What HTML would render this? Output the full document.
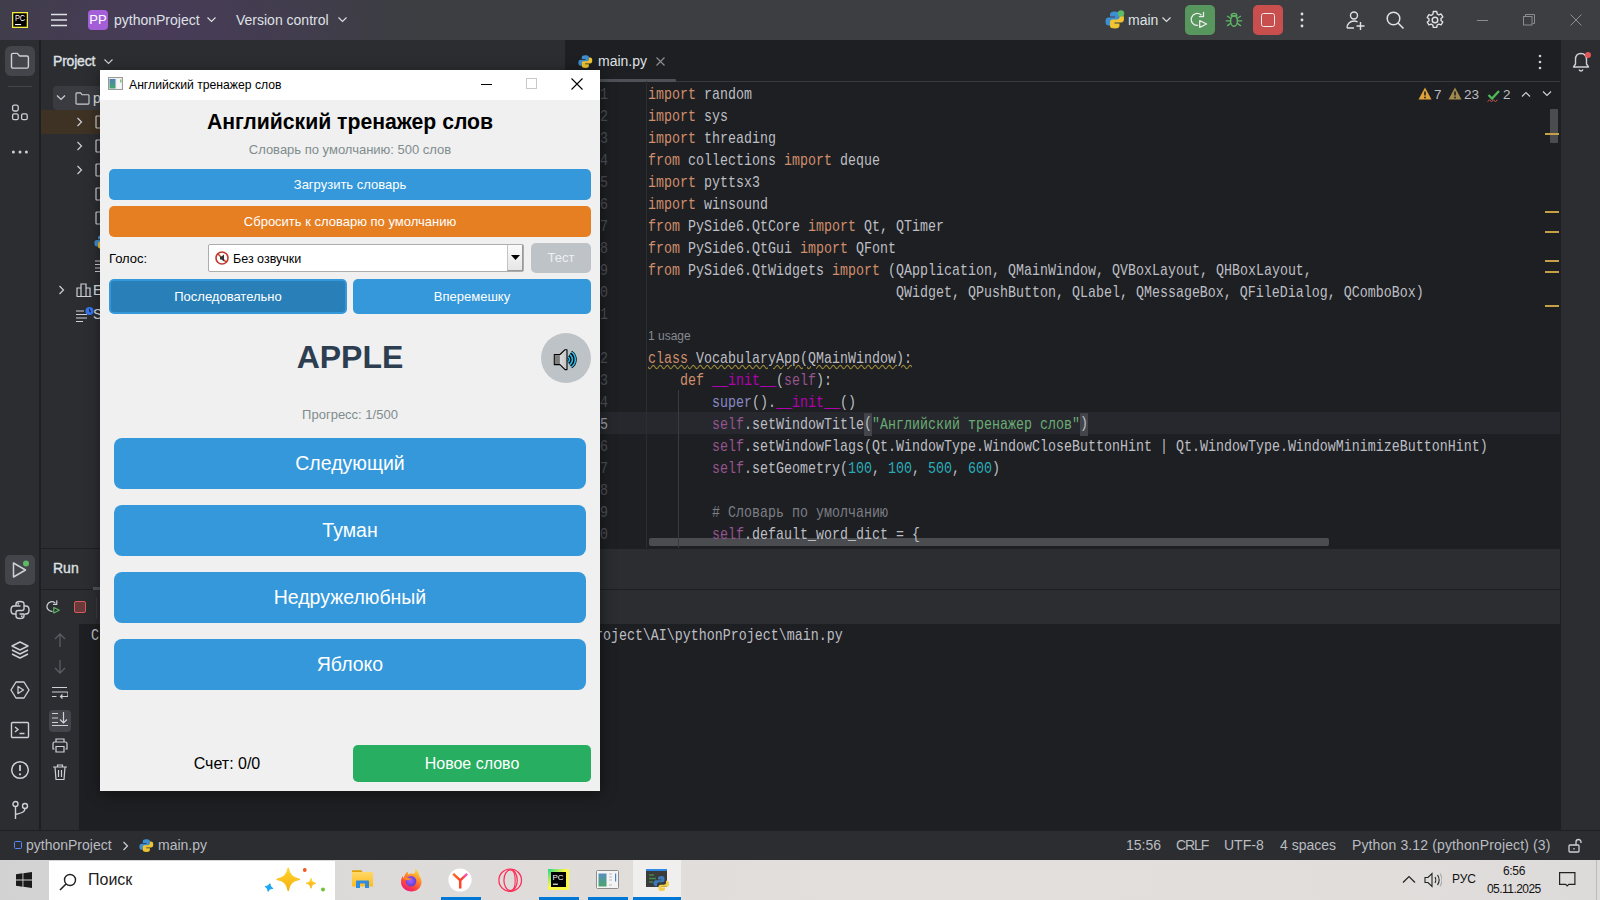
<!DOCTYPE html>
<html><head><meta charset="utf-8">
<style>
*{margin:0;padding:0;box-sizing:border-box}
html,body{width:1600px;height:900px;overflow:hidden;background:#1e1f22;font-family:"Liberation Sans",sans-serif}
.a{position:absolute}
#top{left:0;top:0;width:1600px;height:40px;background:radial-gradient(ellipse 250px 140px at 160px 28px,rgba(80,58,105,.6) 0%,rgba(80,58,105,.35) 45%,rgba(60,63,66,0) 100%),#3c3e42}
#stripeL{left:0;top:40px;width:40px;height:790px;background:#2b2d30;border-right:1px solid #1e1f22}
#proj{left:41px;top:40px;width:524px;height:508px;background:#2b2d30}
#editor{left:565px;top:40px;width:995px;height:508px;background:#1e1f22}
#stripeR{left:1560px;top:40px;width:40px;height:790px;background:#2b2d30;border-left:1px solid #1e1f22}
#run{left:41px;top:548px;width:1519px;height:282px;background:#2b2d30;border-top:1px solid #1e1f22}
#status{left:0;top:830px;width:1600px;height:30px;background:#2b2d30;border-top:1px solid #1e1f22}
#task{left:0;top:860px;width:1600px;height:40px;background:linear-gradient(90deg,#d2d2d2 0%,#dcdad9 20%,#e3dfdc 55%,#e2dedc 80%,#dddbda 100%)}
.code{font-family:"Liberation Mono",monospace;font-size:13.33px;color:#bcbec4;white-space:pre;transform:scaleY(1.2);transform-origin:0 0}
.k{color:#cf8e6d}.s{color:#6aab73}.n{color:#2aacb8}.sf{color:#94558d}.du{color:#b200b2}.cm{color:#7a7e85}
.ln{color:#4b5059;line-height:22px}.sp{color:#8888c6}.br{background:#43454a;padding:1.7px 0}.wv{text-decoration:underline wavy #9c8a3c;text-decoration-thickness:1px;text-underline-offset:1px}
.btn{color:#fff;text-align:center;border-radius:5px}.big{width:472px;height:51px;background:#3498db;border-radius:8px;font-size:19.5px;line-height:51px}
.ui{font-size:13px;color:#dfe1e5}
</style></head><body>
<div id="top" class="a">
 <svg class="a" style="left:12px;top:12px" width="16" height="16" viewBox="0 0 16 16"><rect x=".65" y=".65" width="14.7" height="14.7" fill="#000" stroke="#f4ec3e" stroke-width="1.3"/><text x="2.9" y="9.4" font-family="Liberation Sans" font-size="8.6" fill="#fff" textLength="10.2" lengthAdjust="spacingAndGlyphs">PC</text><rect x="3.1" y="12" width="6" height="1.1" fill="#fff"/></svg>
 <svg class="a" style="left:51px;top:13px" width="16" height="14" viewBox="0 0 16 14"><path d="M0 1.5h16M0 7h16M0 12.5h16" stroke="#dfe1e5" stroke-width="1.4"/></svg>
 <div class="a" style="left:88px;top:10px;width:20px;height:20px;border-radius:4px;background:#a45fd8;color:#fff;font-size:13px;line-height:20px;text-align:center">PP</div>
 <div class="a ui" style="left:114px;top:12px;font-size:14px;color:#dfe1e5">pythonProject</div>
 <svg class="a" style="left:207px;top:17px" width="9" height="6" viewBox="0 0 9 6"><path d="M0.5 0.5l4 4 4-4" fill="none" stroke="#dfe1e5" stroke-width="1.1"/></svg>
 <div class="a ui" style="left:236px;top:12px;font-size:14px;color:#dfe1e5">Version control</div>
 <svg class="a" style="left:338px;top:17px" width="9" height="6" viewBox="0 0 9 6"><path d="M0.5 0.5l4 4 4-4" fill="none" stroke="#dfe1e5" stroke-width="1.1"/></svg>
 <svg class="a" style="left:1105px;top:10px" width="20" height="20" viewBox="0 0 20 20"><path d="M9.5 1.5c-3 0-4.5 1-4.5 3v2h5v1H3.5c-2 0-3 1.5-3 4s1 4 3 4H5v-2.5c0-1.5 1.2-2.5 2.5-2.5h4.5c1.5 0 2.5-1 2.5-2.5v-4c0-1.8-2-2.5-5-2.5z" fill="#3d8fd1"/><path d="M10 18.5c3 0 4.5-1 4.5-3v-2h-5v-1H16c2 0 3-1.5 3-4s-1-4-3-4h-1.5V7c0 1.5-1.2 2.5-2.5 2.5H7.5C6 9.5 5 10.5 5 12v4c0 1.8 2 2.5 5 2.5z" fill="#f0c531"/><circle cx="16" cy="3.5" r="3.2" fill="#5fb865"/></svg>
 <div class="a ui" style="left:1128px;top:12px;font-size:14px;color:#dfe1e5">main</div>
 <svg class="a" style="left:1162px;top:17px" width="9" height="6" viewBox="0 0 9 6"><path d="M0.5 0.5l4 4 4-4" fill="none" stroke="#dfe1e5" stroke-width="1.1"/></svg>
 <div class="a" style="left:1185px;top:5px;width:30px;height:30px;border-radius:5px;background:#57965c"></div>
 <svg class="a" style="left:1190px;top:10px" width="20" height="20" viewBox="0 0 20 20"><path d="M11.2 4.9A6 6 0 1 0 7.6 15.4" fill="none" stroke="#eaeaea" stroke-width="1.3" stroke-linecap="round"/><path d="M13.5 2.3V6.6H9.4" fill="none" stroke="#eaeaea" stroke-width="1.3" stroke-linecap="round" stroke-linejoin="round"/><path d="M9.7 10.6L16.6 14 9.7 17.4z" fill="none" stroke="#eaeaea" stroke-width="1.3" stroke-linejoin="round"/></svg>
 <svg class="a" style="left:1225px;top:10px" width="18" height="20" viewBox="0 0 18 20"><path d="M6.2 6a2.8 2.6 0 0 1 5.6 0z" fill="none" stroke="#5fb865" stroke-width="1.3" stroke-linejoin="round"/><ellipse cx="9" cy="11" rx="3.4" ry="5.2" fill="none" stroke="#5fb865" stroke-width="1.4"/><path d="M2.5 6.3L5.6 8.2M1.2 10.8H5.4M2.5 15.6L5.6 13.4M15.5 6.3L12.4 8.2M16.8 10.8H12.6M15.5 15.6L12.4 13.4" stroke="#5fb865" stroke-width="1.3" stroke-linecap="round"/></svg>
 <div class="a" style="left:1253px;top:5px;width:30px;height:30px;border-radius:5px;background:#c94f4f"></div>
 <div class="a" style="left:1261px;top:13px;width:14px;height:14px;border-radius:2.5px;border:1.4px solid #eaeaea"></div>
 <svg class="a" style="left:1299px;top:11px" width="6" height="18" viewBox="0 0 6 18"><circle cx="3" cy="3" r="1.4" fill="#dfe1e5"/><circle cx="3" cy="9" r="1.4" fill="#dfe1e5"/><circle cx="3" cy="15" r="1.4" fill="#dfe1e5"/></svg>
 <svg class="a" style="left:1345px;top:10px" width="22" height="22" viewBox="0 0 22 22"><circle cx="9" cy="5.5" r="3.5" fill="none" stroke="#dfe1e5" stroke-width="1.4"/><path d="M2 18c0-4 3-7 7-7 1.5 0 2.7.4 3.5 1" fill="none" stroke="#dfe1e5" stroke-width="1.4"/><path d="M2 18h7M15.5 12v8M11.5 16h8" stroke="#dfe1e5" stroke-width="1.4"/></svg>
 <svg class="a" style="left:1385px;top:10px" width="20" height="20" viewBox="0 0 20 20"><circle cx="8.5" cy="8.5" r="6.3" fill="none" stroke="#dfe1e5" stroke-width="1.5"/><path d="M13 13l5.5 5.5" stroke="#dfe1e5" stroke-width="1.6"/></svg>
 <svg class="a" style="left:1425px;top:10px" width="20" height="20" viewBox="0 0 20 20"><path d="M8.3 1.5h3.4l.5 2.4 1.6.9 2.3-.8 1.7 2.9-1.8 1.6v1.9l1.8 1.6-1.7 2.9-2.3-.8-1.6.9-.5 2.4H8.3l-.5-2.4-1.6-.9-2.3.8-1.7-2.9L4 11V9.1L2.2 7.5l1.7-2.9 2.3.8 1.6-.9z" fill="none" stroke="#dfe1e5" stroke-width="1.4" stroke-linejoin="round"/><circle cx="10" cy="10" r="2.8" fill="none" stroke="#dfe1e5" stroke-width="1.4"/></svg>
 <div class="a" style="left:1477px;top:20px;width:11px;height:1px;background:#8a8c90"></div>
 <svg class="a" style="left:1523px;top:14px" width="12" height="12" viewBox="0 0 12 12"><rect x="0.5" y="2.5" width="8.5" height="8.5" fill="none" stroke="#8a8c90"/><path d="M2.5 2.5V.5h9v9h-2" fill="none" stroke="#8a8c90"/></svg>
 <svg class="a" style="left:1570px;top:14px" width="12" height="12" viewBox="0 0 12 12"><path d="M.5.5l11 11M11.5.5l-11 11" stroke="#8a8c90" stroke-width="1"/></svg>
</div>
<div id="stripeL" class="a">
 <div class="a" style="left:5px;top:6px;width:30px;height:30px;border-radius:6px;background:#43454a"></div>
 <svg class="a" style="left:10px;top:12px" width="20" height="18" viewBox="0 0 20 18"><path d="M1.5 3c0-1 .6-1.6 1.6-1.6h4.2l2.4 2.6h7.1c1 0 1.6.6 1.6 1.6v8.9c0 1-.6 1.6-1.6 1.6H3.1c-1 0-1.6-.6-1.6-1.6z" fill="none" stroke="#cdd0d6" stroke-width="1.4" stroke-linejoin="round"/></svg>
 <div class="a" style="left:8px;top:46px;width:24px;height:1px;background:#43454a"></div>
 <svg class="a" style="left:11px;top:63px" width="18" height="18" viewBox="0 0 18 18"><rect x="1.6" y="2.2" width="5.6" height="5.8" rx="1.5" fill="none" stroke="#cdd0d6" stroke-width="1.3"/><rect x="1.6" y="10.9" width="5.6" height="5.8" rx="1.5" fill="none" stroke="#cdd0d6" stroke-width="1.3"/><rect x="10.6" y="10.9" width="5.6" height="5.8" rx="1.5" fill="none" stroke="#cdd0d6" stroke-width="1.3"/></svg>
 <svg class="a" style="left:10px;top:109px" width="20" height="6" viewBox="0 0 20 6"><circle cx="3.4" cy="3" r="1.5" fill="#cdd0d6"/><circle cx="10" cy="3" r="1.5" fill="#cdd0d6"/><circle cx="16.4" cy="3" r="1.5" fill="#cdd0d6"/></svg>
 <div class="a" style="left:5px;top:515px;width:30px;height:30px;border-radius:5px;background:#43454a"></div>
 <svg class="a" style="left:10px;top:520px" width="20" height="20" viewBox="0 0 20 20"><path d="M3.5 3v14l12-7z" fill="none" stroke="#cdd0d6" stroke-width="1.5" stroke-linejoin="round"/><circle cx="16" cy="3.5" r="3" fill="#5fb865"/></svg>
 <svg class="a" style="left:10px;top:560px" width="20" height="20" viewBox="0 0 20 20"><path d="M10 1.5c-3 0-4 1-4 2.5V6h4.5M6 6H4c-2 0-3 1.5-3 4s1 4 3 4h1.5M14 14v2c0 1.5-1 2.5-4 2.5s-4-1-4-2.5v-3.5c0-1.2 1-2 2-2h4c1.2 0 2-.8 2-2V4c0-1.5-1-2.5-4-2.5M14 6h2c2 0 3 1.5 3 4s-1 4-3 4h-1.5M9.5 14H14" fill="none" stroke="#cdd0d6" stroke-width="1.4"/><circle cx="8.2" cy="3.8" r=".9" fill="#cdd0d6"/><circle cx="11.8" cy="16.2" r=".9" fill="#cdd0d6"/></svg>
 <svg class="a" style="left:10px;top:600px" width="20" height="20" viewBox="0 0 20 20"><path d="M10 2l8 4-8 4-8-4z" fill="none" stroke="#cdd0d6" stroke-width="1.4" stroke-linejoin="round"/><path d="M2 10l8 4 8-4M2 14l8 4 8-4" fill="none" stroke="#cdd0d6" stroke-width="1.4" stroke-linejoin="round"/></svg>
 <svg class="a" style="left:10px;top:640px" width="20" height="20" viewBox="0 0 20 20"><path d="M6 2h8l5 8-5 8H6l-5-8z" fill="none" stroke="#cdd0d6" stroke-width="1.4" stroke-linejoin="round"/><path d="M8 6.5v7l5.5-3.5z" fill="none" stroke="#cdd0d6" stroke-width="1.3" stroke-linejoin="round"/></svg>
 <svg class="a" style="left:10px;top:680px" width="20" height="20" viewBox="0 0 20 20"><rect x="1.5" y="2.5" width="17" height="15" rx="1" fill="none" stroke="#cdd0d6" stroke-width="1.4"/><path d="M5 7l3 2.5L5 12M9.5 13.5h5" fill="none" stroke="#cdd0d6" stroke-width="1.4"/></svg>
 <svg class="a" style="left:10px;top:720px" width="20" height="20" viewBox="0 0 20 20"><circle cx="10" cy="10" r="8.3" fill="none" stroke="#cdd0d6" stroke-width="1.5"/><path d="M10 5v6" stroke="#cdd0d6" stroke-width="1.8"/><circle cx="10" cy="14.3" r="1.1" fill="#cdd0d6"/></svg>
 <svg class="a" style="left:10px;top:760px" width="20" height="20" viewBox="0 0 20 20"><circle cx="5.5" cy="4" r="2.5" fill="none" stroke="#cdd0d6" stroke-width="1.4"/><circle cx="15" cy="6" r="2.5" fill="none" stroke="#cdd0d6" stroke-width="1.4"/><path d="M5.5 6.5V19M15 8.5c0 3.5-3 4.5-9.5 6" fill="none" stroke="#cdd0d6" stroke-width="1.4"/></svg>
</div>
<div id="proj" class="a">
 <div class="a ui" style="left:12px;top:13px;font-size:14px;color:#dfe1e5;-webkit-text-stroke:.35px #dfe1e5;letter-spacing:-.2px">Project</div>
 <svg class="a" style="left:63px;top:19px" width="9" height="6" viewBox="0 0 9 6"><path d="M0.5 0.5l4 4 4-4" fill="none" stroke="#cdd0d6" stroke-width="1.1"/></svg>
 <div class="a" style="left:12px;top:46px;width:520px;height:24px;border-radius:4px;background:#393b40"></div>
 <div class="a" style="left:0;top:70px;width:524px;height:24px;background:#3d3223"></div>
 <svg class="a" style="left:15px;top:55px" width="10" height="6" viewBox="0 0 10 6"><path d="M1 .5l4 4 4-4" fill="none" stroke="#cdd0d6" stroke-width="1.2"/></svg>
 <svg class="a" style="left:34px;top:52px" width="15" height="13" viewBox="0 0 16 14"><path d="M1 2c0-.7.3-1 1-1h4l1.5 2H14c.7 0 1 .3 1 1v8c0 .7-.3 1-1 1H2c-.7 0-1-.3-1-1z" fill="none" stroke="#cdd0d6" stroke-width="1.2"/></svg>
 <div class="a ui" style="left:52px;top:50px;font-size:14px;color:#dfe1e5">pythonProject</div>
 <svg class="a" style="left:36px;top:77px" width="6" height="10" viewBox="0 0 6 10"><path d="M.5 1l4 4-4 4" fill="none" stroke="#cdd0d6" stroke-width="1.2"/></svg>
 <svg class="a" style="left:54px;top:75px" width="16" height="14" viewBox="0 0 16 14"><path d="M1 2c0-.7.3-1 1-1h4l1.5 2H14c.7 0 1 .3 1 1v8c0 .7-.3 1-1 1H2c-.7 0-1-.3-1-1z" fill="none" stroke="#cdd0d6" stroke-width="1.2"/></svg>
 <svg class="a" style="left:36px;top:101px" width="6" height="10" viewBox="0 0 6 10"><path d="M.5 1l4 4-4 4" fill="none" stroke="#cdd0d6" stroke-width="1.2"/></svg>
 <svg class="a" style="left:54px;top:99px" width="16" height="14" viewBox="0 0 16 14"><path d="M1 2c0-.7.3-1 1-1h4l1.5 2H14c.7 0 1 .3 1 1v8c0 .7-.3 1-1 1H2c-.7 0-1-.3-1-1z" fill="none" stroke="#cdd0d6" stroke-width="1.2"/></svg>
 <svg class="a" style="left:36px;top:125px" width="6" height="10" viewBox="0 0 6 10"><path d="M.5 1l4 4-4 4" fill="none" stroke="#cdd0d6" stroke-width="1.2"/></svg>
 <svg class="a" style="left:54px;top:123px" width="16" height="14" viewBox="0 0 16 14"><path d="M1 2c0-.7.3-1 1-1h4l1.5 2H14c.7 0 1 .3 1 1v8c0 .7-.3 1-1 1H2c-.7 0-1-.3-1-1z" fill="none" stroke="#cdd0d6" stroke-width="1.2"/></svg>
 <svg class="a" style="left:54px;top:147px" width="16" height="14" viewBox="0 0 16 14"><path d="M1 2c0-.7.3-1 1-1h4l1.5 2H14c.7 0 1 .3 1 1v8c0 .7-.3 1-1 1H2c-.7 0-1-.3-1-1z" fill="none" stroke="#cdd0d6" stroke-width="1.2"/></svg>
 <svg class="a" style="left:54px;top:171px" width="16" height="14" viewBox="0 0 16 14"><path d="M1 2c0-.7.3-1 1-1h4l1.5 2H14c.7 0 1 .3 1 1v8c0 .7-.3 1-1 1H2c-.7 0-1-.3-1-1z" fill="none" stroke="#cdd0d6" stroke-width="1.2"/></svg>
 <svg class="a" style="left:53px;top:194px" width="16" height="16" viewBox="0 0 20 20"><path d="M9.5 1.5c-3 0-4.5 1-4.5 3v2h5v1H3.5c-2 0-3 1.5-3 4s1 4 3 4H5v-2.5c0-1.5 1.2-2.5 2.5-2.5h4.5c1.5 0 2.5-1 2.5-2.5v-4c0-1.8-2-2.5-5-2.5z" fill="#3d8fd1"/><path d="M10 18.5c3 0 4.5-1 4.5-3v-2h-5v-1H16c2 0 3-1.5 3-4s-1-4-3-4h-1.5V7c0 1.5-1.2 2.5-2.5 2.5H7.5C6 9.5 5 10.5 5 12v4c0 1.8 2 2.5 5 2.5z" fill="#f0c531"/></svg>
 <svg class="a" style="left:54px;top:220px" width="14" height="12" viewBox="0 0 14 12"><path d="M0 1h14M0 4.5h14M0 8h14M0 11.5h9" stroke="#cdd0d6" stroke-width="1.2"/></svg>
 <svg class="a" style="left:18px;top:245px" width="6" height="10" viewBox="0 0 6 10"><path d="M.5 1l4 4-4 4" fill="none" stroke="#cdd0d6" stroke-width="1.2"/></svg>
 <svg class="a" style="left:35px;top:242px" width="16" height="15" viewBox="0 0 16 15"><path d="M1 14V6h4v8M5 14V2h5v12M10 14V6h4v8M.5 14.5h15" fill="none" stroke="#cdd0d6" stroke-width="1.2"/></svg>
 <div class="a ui" style="left:52px;top:242px;font-size:14px;color:#dfe1e5">External Libraries</div>
 <svg class="a" style="left:35px;top:267px" width="18" height="15" viewBox="0 0 18 15"><path d="M0 4h8M0 7.5h11M0 11h11M0 14.5h7" stroke="#cdd0d6" stroke-width="1.2"/><circle cx="13.5" cy="4" r="4" fill="#3574f0"/><path d="M13.5 1.8v2.4l1.5 1" stroke="#2b2d30" stroke-width="1"/></svg>
 <div class="a ui" style="left:52px;top:266px;font-size:14px;color:#dfe1e5">Scratches and Consoles</div>
</div>
<div id="editor" class="a">
 <svg class="a" style="left:13px;top:14px" width="15" height="15" viewBox="0 0 20 20"><path d="M9.5 1.5c-3 0-4.5 1-4.5 3v2h5v1H3.5c-2 0-3 1.5-3 4s1 4 3 4H5v-2.5c0-1.5 1.2-2.5 2.5-2.5h4.5c1.5 0 2.5-1 2.5-2.5v-4c0-1.8-2-2.5-5-2.5z" fill="#3d8fd1"/><path d="M10 18.5c3 0 4.5-1 4.5-3v-2h-5v-1H16c2 0 3-1.5 3-4s-1-4-3-4h-1.5V7c0 1.5-1.2 2.5-2.5 2.5H7.5C6 9.5 5 10.5 5 12v4c0 1.8 2 2.5 5 2.5z" fill="#f0c531"/></svg>
 <div class="a ui" style="left:33px;top:13px;font-size:14px;color:#dfe1e5">main.py</div>
 <svg class="a" style="left:91px;top:17px" width="9" height="9" viewBox="0 0 9 9"><path d="M.5.5l8 8M8.5.5l-8 8" stroke="#8c8f94" stroke-width="1.1"/></svg>
 <div class="a" style="left:0;top:41px;width:995px;height:1px;background:#393b40"></div>
 <div class="a" style="left:0;top:39px;width:111px;height:3px;background:#4e5157;border-radius:1px"></div>
 <svg class="a" style="left:973px;top:14px" width="4" height="16" viewBox="0 0 4 16"><circle cx="2" cy="2" r="1.3" fill="#cdd0d6"/><circle cx="2" cy="8" r="1.3" fill="#cdd0d6"/><circle cx="2" cy="14" r="1.3" fill="#cdd0d6"/></svg>
 <svg class="a" style="left:853px;top:47px" width="14" height="13" viewBox="0 0 14 13"><path d="M7 .5L13.5 12.5H.5z" fill="#e0a23a"/><path d="M7 4.5v4" stroke="#1e1f22" stroke-width="1.6"/><circle cx="7" cy="10.5" r=".9" fill="#1e1f22"/></svg>
 <div class="a ui" style="left:869px;top:47px;font-size:13.5px;color:#bcbec4">7</div>
 <svg class="a" style="left:883px;top:47px" width="14" height="13" viewBox="0 0 14 13"><path d="M7 .5L13.5 12.5H.5z" fill="#a08a4c"/><path d="M7 4.5v4" stroke="#1e1f22" stroke-width="1.6"/><circle cx="7" cy="10.5" r=".9" fill="#1e1f22"/></svg>
 <div class="a ui" style="left:899px;top:47px;font-size:13.5px;color:#bcbec4">23</div>
 <svg class="a" style="left:922px;top:49px" width="14" height="14" viewBox="0 0 14 14"><path d="M1.5 6l3.5 3.5 7-7.5" fill="none" stroke="#4fb85a" stroke-width="2.3"/><path d="M.5 12.5l2-1.5 2 1.5 2-1.5 2 1.5 2-1.5" fill="none" stroke="#d9534f" stroke-width="1"/></svg>
 <div class="a ui" style="left:938px;top:47px;font-size:13.5px;color:#bcbec4">2</div>
 <svg class="a" style="left:956px;top:51px" width="10" height="6" viewBox="0 0 10 6"><path d="M1 5.5l4-4 4 4" fill="none" stroke="#cdd0d6" stroke-width="1.2"/></svg>
 <svg class="a" style="left:977px;top:51px" width="10" height="6" viewBox="0 0 10 6"><path d="M1 .5l4 4 4-4" fill="none" stroke="#cdd0d6" stroke-width="1.2"/></svg>
 <div class="a" style="left:985px;top:69px;width:8px;height:34px;background:#4a4c50;border-radius:1px"></div>
 <div class="a" style="left:980px;top:93px;width:14px;height:2px;background:#c5a047"></div>
 <div class="a" style="left:980px;top:171px;width:14px;height:2px;background:#c5a047"></div>
 <div class="a" style="left:980px;top:191px;width:14px;height:2px;background:#c5a047"></div>
 <div class="a" style="left:980px;top:220px;width:14px;height:2px;background:#c5a047"></div>
 <div class="a" style="left:980px;top:231px;width:14px;height:2px;background:#c5a047"></div>
 <div class="a" style="left:980px;top:265px;width:14px;height:2px;background:#c5a047"></div>
 <div class="a" style="left:84px;top:498px;width:680px;height:8px;background:#4a4c50;border-radius:2px"></div>
 <div class="a" style="left:0;top:372px;width:995px;height:22px;background:#26282e"></div>
 <div class="a" style="left:81px;top:41px;width:1px;height:467px;background:#2b2d30"></div>
 <div class="a" style="left:113px;top:350px;width:1px;height:158px;background:#393b40"></div>
 <div class="a code ln" style="left:0;top:42px;width:43px;text-align:right">1</div>
 <div class="a code" style="left:83px;top:42px;line-height:22px"><span class="k">import</span> random</div>
 <div class="a code ln" style="left:0;top:64px;width:43px;text-align:right">2</div>
 <div class="a code" style="left:83px;top:64px;line-height:22px"><span class="k">import</span> sys</div>
 <div class="a code ln" style="left:0;top:86px;width:43px;text-align:right">3</div>
 <div class="a code" style="left:83px;top:86px;line-height:22px"><span class="k">import</span> threading</div>
 <div class="a code ln" style="left:0;top:108px;width:43px;text-align:right">4</div>
 <div class="a code" style="left:83px;top:108px;line-height:22px"><span class="k">from</span> collections <span class="k">import</span> deque</div>
 <div class="a code ln" style="left:0;top:130px;width:43px;text-align:right">5</div>
 <div class="a code" style="left:83px;top:130px;line-height:22px"><span class="k">import</span> pyttsx3</div>
 <div class="a code ln" style="left:0;top:152px;width:43px;text-align:right">6</div>
 <div class="a code" style="left:83px;top:152px;line-height:22px"><span class="k">import</span> winsound</div>
 <div class="a code ln" style="left:0;top:174px;width:43px;text-align:right">7</div>
 <div class="a code" style="left:83px;top:174px;line-height:22px"><span class="k">from</span> PySide6.QtCore <span class="k">import</span> Qt, QTimer</div>
 <div class="a code ln" style="left:0;top:196px;width:43px;text-align:right">8</div>
 <div class="a code" style="left:83px;top:196px;line-height:22px"><span class="k">from</span> PySide6.QtGui <span class="k">import</span> QFont</div>
 <div class="a code ln" style="left:0;top:218px;width:43px;text-align:right">9</div>
 <div class="a code" style="left:83px;top:218px;line-height:22px"><span class="k">from</span> PySide6.QtWidgets <span class="k">import</span> (QApplication, QMainWindow, QVBoxLayout, QHBoxLayout,</div>
 <div class="a code ln" style="left:0;top:240px;width:43px;text-align:right">10</div>
 <div class="a code" style="left:83px;top:240px;line-height:22px">                               QWidget, QPushButton, QLabel, QMessageBox, QFileDialog, QComboBox)</div>
 <div class="a code ln" style="left:0;top:262px;width:43px;text-align:right">11</div>
 <div class="a code" style="left:83px;top:262px;line-height:22px"></div>
 <div class="a code ln" style="left:0;top:306px;width:43px;text-align:right">12</div>
 <div class="a code" style="left:83px;top:306px;line-height:22px"><span class="wv"><span class="k">class</span> VocabularyApp(QMainWindow):</span></div>
 <div class="a code ln" style="left:0;top:328px;width:43px;text-align:right">13</div>
 <div class="a code" style="left:83px;top:328px;line-height:22px">    <span class="k">def</span> <span class="du">__init__</span>(<span class="sf">self</span>):</div>
 <div class="a code ln" style="left:0;top:350px;width:43px;text-align:right">14</div>
 <div class="a code" style="left:83px;top:350px;line-height:22px">        <span class="sp">super</span>().<span class="du">__init__</span>()</div>
 <div class="a code ln" style="left:0;top:372px;width:43px;text-align:right;color:#a1a3ab">15</div>
 <div class="a code" style="left:83px;top:372px;line-height:22px">        <span class="sf">self</span>.setWindowTitle<span class="br">(</span><span class="s">"Английский тренажер слов"</span><span class="br">)</span></div>
 <div class="a code ln" style="left:0;top:394px;width:43px;text-align:right">16</div>
 <div class="a code" style="left:83px;top:394px;line-height:22px">        <span class="sf">self</span>.setWindowFlags(Qt.WindowType.WindowCloseButtonHint | Qt.WindowType.WindowMinimizeButtonHint)</div>
 <div class="a code ln" style="left:0;top:416px;width:43px;text-align:right">17</div>
 <div class="a code" style="left:83px;top:416px;line-height:22px">        <span class="sf">self</span>.setGeometry(<span class="n">100</span>, <span class="n">100</span>, <span class="n">500</span>, <span class="n">600</span>)</div>
 <div class="a code ln" style="left:0;top:438px;width:43px;text-align:right">18</div>
 <div class="a code" style="left:83px;top:438px;line-height:22px"></div>
 <div class="a code ln" style="left:0;top:460px;width:43px;text-align:right">19</div>
 <div class="a code" style="left:83px;top:460px;line-height:22px">        <span class="cm"># Словарь по умолчанию</span></div>
 <div class="a code ln" style="left:0;top:482px;width:43px;text-align:right">20</div>
 <div class="a code" style="left:83px;top:482px;line-height:22px">        <span class="sf">self</span>.default_word_dict = {</div>
 <div class="a" style="left:83px;top:289px;font-size:12px;color:#868a91">1 usage</div>
</div>
<div id="stripeR" class="a">
 <svg class="a" style="left:10px;top:11px" width="22" height="22" viewBox="0 0 22 22"><path d="M10 2.5c-3.5 0-5.5 2.5-5.5 6v4.5L2.5 16h15l-2-3V8.5c0-3.5-2-6-5.5-6z" fill="none" stroke="#cdd0d6" stroke-width="1.4" stroke-linejoin="round"/><path d="M8 18.5c.5 1 1.2 1.5 2 1.5s1.5-.5 2-1.5" fill="none" stroke="#cdd0d6" stroke-width="1.4"/><circle cx="17" cy="4" r="3" fill="#e55757"/></svg>
</div>
<div id="run" class="a">
 <div class="a ui" style="left:12px;top:11px;font-size:14px;color:#dfe1e5;-webkit-text-stroke:.35px #dfe1e5">Run</div>
 <div class="a" style="left:0;top:40px;width:1519px;height:1px;background:#1e1f22"></div>
 <div class="a" style="left:52px;top:38px;width:60px;height:3px;background:#4e5157"></div>
 <svg class="a" style="left:5px;top:50px" width="16" height="16" viewBox="0 0 20 20"><path d="M11.2 4.9A6 6 0 1 0 7.6 15.4" fill="none" stroke="#cdd0d6" stroke-width="1.5" stroke-linecap="round"/><path d="M13.5 2.3V6.6H9.4" fill="none" stroke="#cdd0d6" stroke-width="1.5" stroke-linecap="round" stroke-linejoin="round"/><path d="M9.7 10.6L16.6 14 9.7 17.4z" fill="none" stroke="#5fb865" stroke-width="1.5" stroke-linejoin="round"/></svg>
 <div class="a" style="left:33px;top:52px;width:12px;height:12px;border-radius:2px;border:1.4px solid #d65a5a;background:#6a3a3a"></div>
 <div class="a" style="left:55px;top:48px;width:1px;height:22px;background:#393b40"></div>
 <div class="a" style="left:38px;top:75px;width:1481px;height:207px;background:#1e1f22"></div>
 <div class="a code" style="left:50px;top:74px;line-height:22px">C:\Users\user\PycharmProjects\venv\Scripts\python.exe C:\UsersProject\AI\pythonProject\main.py</div>
 <svg class="a" style="left:13px;top:84px" width="12" height="14" viewBox="0 0 12 14"><path d="M6 1v13M1 6l5-5 5 5" fill="none" stroke="#5a5d63" stroke-width="1.3"/></svg>
 <svg class="a" style="left:13px;top:111px" width="12" height="14" viewBox="0 0 12 14"><path d="M6 0v13M1 8l5 5 5-5" fill="none" stroke="#5a5d63" stroke-width="1.3"/></svg>
 <svg class="a" style="left:11px;top:137px" width="16" height="14" viewBox="0 0 16 14"><path d="M0 1.5h15M0 6h15c1.5 0 1.5 4.5 0 4.5H8.5M10.5 8.5l-2 2 2 2M0 10.5h4.5" fill="none" stroke="#cdd0d6" stroke-width="1.2"/></svg>
 <div class="a" style="left:8px;top:161px;width:22px;height:22px;border-radius:4px;background:#43454a"></div>
 <svg class="a" style="left:11px;top:163px" width="16" height="14" viewBox="0 0 16 14"><path d="M0 1.5h6M0 6h6M0 10.5h6M0 13.5h16M11.5 0v11M8 7.5l3.5 3.5 3.5-3.5" fill="none" stroke="#cdd0d6" stroke-width="1.2"/></svg>
 <svg class="a" style="left:11px;top:189px" width="16" height="15" viewBox="0 0 16 15"><path d="M4 4V1h8v3M2.5 11H1V5.5C1 4.5 1.5 4 2.5 4h11c1 0 1.5.5 1.5 1.5V11h-1.5M4 8.5h8V14H4z" fill="none" stroke="#cdd0d6" stroke-width="1.2"/></svg>
 <svg class="a" style="left:12px;top:215px" width="14" height="16" viewBox="0 0 14 16"><path d="M0 3h14M4.5 3V1h5v2M2 3l1 12.5h8L12 3M5.5 6v7M8.5 6v7" fill="none" stroke="#cdd0d6" stroke-width="1.2"/></svg>
</div>
<div id="status" class="a">
 <div class="a" style="left:14px;top:10px;width:8px;height:8px;border:1.3px solid #548af7;border-radius:1.5px"></div>
 <div class="a ui" style="left:26px;top:6px;font-size:14px;color:#b9bcc1">pythonProject</div>
 <svg class="a" style="left:123px;top:10px" width="6" height="10" viewBox="0 0 6 10"><path d="M.5 1l4 4-4 4" fill="none" stroke="#cdd0d6" stroke-width="1.2"/></svg>
 <svg class="a" style="left:139px;top:7px" width="15" height="15" viewBox="0 0 20 20"><path d="M9.5 1.5c-3 0-4.5 1-4.5 3v2h5v1H3.5c-2 0-3 1.5-3 4s1 4 3 4H5v-2.5c0-1.5 1.2-2.5 2.5-2.5h4.5c1.5 0 2.5-1 2.5-2.5v-4c0-1.8-2-2.5-5-2.5z" fill="#3d8fd1"/><path d="M10 18.5c3 0 4.5-1 4.5-3v-2h-5v-1H16c2 0 3-1.5 3-4s-1-4-3-4h-1.5V7c0 1.5-1.2 2.5-2.5 2.5H7.5C6 9.5 5 10.5 5 12v4c0 1.8 2 2.5 5 2.5z" fill="#f0c531"/></svg>
 <div class="a ui" style="left:158px;top:6px;font-size:14px;color:#b9bcc1">main.py</div>
 <div class="a ui" style="left:1126px;top:6px;font-size:14px;color:#b9bcc1">15:56</div>
 <div class="a ui" style="left:1176px;top:6px;font-size:14px;color:#b9bcc1;letter-spacing:-1.1px">CRLF</div>
 <div class="a ui" style="left:1224px;top:6px;font-size:14px;color:#b9bcc1">UTF-8</div>
 <div class="a ui" style="left:1280px;top:6px;font-size:14px;color:#b9bcc1">4 spaces</div>
 <div class="a ui" style="left:1352px;top:6px;font-size:14px;color:#b9bcc1;letter-spacing:.13px">Python 3.12 (pythonProject) (3)</div>
 <svg class="a" style="left:1568px;top:7px" width="14" height="15" viewBox="0 0 14 15"><rect x="1" y="7" width="10" height="7" rx="1" fill="none" stroke="#cdd0d6" stroke-width="1.3"/><path d="M8 7V4a2.5 2.5 0 0 1 5 0v1" fill="none" stroke="#cdd0d6" stroke-width="1.3"/><path d="M6 10v1.5" stroke="#cdd0d6" stroke-width="1.3"/></svg>
</div>
<div id="app" class="a" style="left:100px;top:70px;width:500px;height:721px;background:#f0f0f0;box-shadow:1px 3px 14px rgba(0,0,0,.45)">
 <div class="a" style="left:0;top:0;width:500px;height:30px;background:#fff"></div>
 <svg class="a" style="left:8px;top:7px" width="15" height="13" viewBox="0 0 15 13"><defs><linearGradient id="g1" x1="0" y1="0" x2="0" y2="1"><stop offset="0" stop-color="#4f7fb8"/><stop offset="1" stop-color="#45a86a"/></linearGradient></defs><rect x=".5" y=".5" width="14" height="12" fill="#ececec" stroke="#9a9a9a"/><rect x="1.5" y="2" width="6" height="9.5" fill="url(#g1)"/><rect x="8.5" y="2" width="5" height="9.5" fill="#f6f6f6"/><rect x="12" y="2.5" width="1.5" height="3" fill="#7bc47a"/></svg>
 <div class="a" style="left:29px;top:8px;font-size:12.2px;color:#000">Английский тренажер слов</div>
 <div class="a" style="left:381px;top:14px;width:11px;height:1px;background:#000"></div>
 <div class="a" style="left:426px;top:8px;width:11px;height:11px;border:1px solid #c8c8c8"></div>
 <svg class="a" style="left:471px;top:8px" width="12" height="12" viewBox="0 0 12 12"><path d="M.5.5l11 11M11.5.5l-11 11" stroke="#000" stroke-width="1.1"/></svg>
 <div class="a" style="left:0;top:40px;width:500px;text-align:center;font-size:21.2px;font-weight:bold;color:#000">Английский тренажер слов</div>
 <div class="a" style="left:0;top:72px;width:500px;text-align:center;font-size:13px;color:#7f8c8d">Словарь по умолчанию: 500 слов</div>
 <div class="a btn" style="left:9px;top:99px;width:482px;height:31px;background:#3498db;font-size:13px;line-height:31px">Загрузить словарь</div>
 <div class="a btn" style="left:9px;top:136px;width:482px;height:31px;background:#e67e22;font-size:13px;line-height:31px">Сбросить к словарю по умолчанию</div>
 <div class="a" style="left:9px;top:181px;font-size:13px;color:#000">Голос:</div>
 <div class="a" style="left:108px;top:174px;width:316px;height:28px;background:#fff;border:1px solid #adadad;border-radius:2px"></div>
 <svg class="a" style="left:115px;top:181px" width="14" height="14" viewBox="0 0 14 14"><circle cx="7" cy="7" r="6" fill="#fff" stroke="#c0392b" stroke-width="1.6"/><path d="M3 3l8 8" stroke="#c0392b" stroke-width="1.4"/><path d="M5 5.5h1.5L9 3.5v7L6.5 8.5H5z" fill="#333"/></svg>
 <div class="a" style="left:133px;top:181px;font-size:12.5px;color:#000;transform:scaleY(1.08);transform-origin:0 0">Без озвучки</div>
 <div class="a" style="left:407px;top:175px;width:16px;height:26px;background:linear-gradient(#fbfbfb,#e6e6e6);border-left:1px solid #c4c4c4;border-right:1px solid #999;border-bottom:1px solid #999"></div>
 <svg class="a" style="left:411px;top:185px" width="9" height="5" viewBox="0 0 9 5"><path d="M0 0h9L4.5 5z" fill="#000"/></svg>
 <div class="a btn" style="left:431px;top:173px;width:60px;height:30px;background:#bdc3c7;font-size:13px;line-height:30px;color:#eef0f1">Тест</div>
 <div class="a btn" style="left:9px;top:209px;width:238px;height:35px;background:#2980b9;border:2px solid #3498db;font-size:13px;line-height:31px">Последовательно</div>
 <div class="a btn" style="left:253px;top:209px;width:238px;height:35px;background:#3498db;font-size:13px;line-height:35px">Вперемешку</div>
 <div class="a" style="left:0;top:269px;width:500px;text-align:center;font-size:32px;font-weight:bold;color:#2c3e50;padding-right:0px">APPLE</div>
 <div class="a" style="left:441px;top:263px;width:50px;height:50px;border-radius:25px;background:#bdc3c7"></div>
 <svg class="a" style="left:436px;top:258px" width="60" height="60" viewBox="0 0 60 60"><defs><linearGradient id="g2" x1="0" y1="0" x2="1" y2="0"><stop offset="0" stop-color="#b8b8b8"/><stop offset=".5" stop-color="#d8d8d8"/><stop offset="1" stop-color="#c4c4c4"/></linearGradient></defs>
 <path d="M18.3 26.5H24L29 21.7H31V41.6H29L24 36.6H18.3z" fill="url(#g2)" stroke="#000" stroke-width="1.1" stroke-linejoin="round"/><path d="M18.9 27.1H23.9V36H18.9z" fill="#7e7e7e"/>
 <path d="M32.04 28.82A3.2 3.2 0 0 1 32.04 34.18 M33.62 26.38A6.1 6.1 0 0 1 33.62 36.62 M35.20 23.95A9.0 9.0 0 0 1 35.20 39.05" fill="none" stroke="#000" stroke-width="2.9"/><path d="M32.04 28.82A3.2 3.2 0 0 1 32.04 34.18 M33.62 26.38A6.1 6.1 0 0 1 33.62 36.62 M35.20 23.95A9.0 9.0 0 0 1 35.20 39.05" fill="none" stroke="#2fb8e6" stroke-width="1.6"/></svg>
 <div class="a" style="left:0;top:337px;width:500px;text-align:center;font-size:13px;color:#7f8c8d">Прогресс: 1/500</div>
 <div class="a btn big" style="left:14px;top:368px">Следующий</div>
 <div class="a btn big" style="left:14px;top:435px">Туман</div>
 <div class="a btn big" style="left:14px;top:502px">Недружелюбный</div>
 <div class="a btn big" style="left:14px;top:569px">Яблоко</div>
 <div class="a" style="left:0;top:685px;width:254px;text-align:center;font-size:16px;color:#000">Счет: 0/0</div>
 <div class="a btn" style="left:253px;top:675px;width:238px;height:37px;background:#27ae60;font-size:16px;line-height:37px">Новое слово</div>
</div>
<div id="task" class="a">
 <svg class="a" style="left:16px;top:12px" width="16" height="16" viewBox="0 0 18 18"><path d="M0 2.5l7.3-1v7H0zM8.3 1.4L18 0v8.5H8.3zM0 9.5h7.3v7L0 15.5zM8.3 9.5H18V18l-9.7-1.4z" fill="#1a1a1a"/></svg>
 <div class="a" style="left:49px;top:1px;width:286px;height:39px;background:#fff"></div>
 <svg class="a" style="left:59px;top:13px" width="18" height="18" viewBox="0 0 18 18"><circle cx="11" cy="7" r="5.5" fill="none" stroke="#222" stroke-width="1.4"/><path d="M7 11l-6 6" stroke="#222" stroke-width="1.6"/></svg>
 <div class="a" style="left:88px;top:11px;font-size:16px;color:#222">Поиск</div>
 <svg class="a" style="left:255px;top:2px" width="80" height="36" viewBox="0 0 80 36"><defs><linearGradient id="stg" x1="0" y1="0" x2="0" y2="1"><stop offset="0" stop-color="#ffd62a"/><stop offset="1" stop-color="#f5ae12"/></linearGradient></defs><path d="M33.2 6.0C34.56 13.01 37.49 15.94 44.5 17.3C37.49 18.66 34.56 21.59 33.2 28.6C31.84 21.59 28.91 18.66 21.900000000000002 17.3C28.91 15.94 31.84 13.01 33.2 6.0Z" fill="url(#stg)" stroke="url(#stg)" stroke-width="1.2" stroke-linejoin="round"/><path d="M56 16.3C56.60 19.40 57.90 20.70 61.0 21.3C57.90 21.90 56.60 23.20 56 26.3C55.40 23.20 54.10 21.90 51.0 21.3C54.10 20.70 55.40 19.40 56 16.3Z" fill="url(#stg)" stroke="url(#stg)" stroke-width=".8" stroke-linejoin="round"/><path d="M14 21.7C14.46 24.06 15.44 25.04 17.8 25.5C15.44 25.96 14.46 26.94 14 29.3C13.54 26.94 12.56 25.96 10.2 25.5C12.56 25.04 13.54 24.06 14 21.7Z" fill="#1ea7f0" stroke="#1ea7f0" stroke-width="1" stroke-linejoin="round" transform="rotate(15 14 25.5)"/><circle cx="49.75" cy="8" r="1.9" fill="#f05a1e"/><circle cx="68" cy="27.5" r="2" fill="#6cc23a"/></svg>
 <svg class="a" style="left:352px;top:10px" width="22" height="19" viewBox="0 0 22 19"><defs><linearGradient id="exg" x1="0" y1="0" x2="0" y2="1"><stop offset="0" stop-color="#ffd86a"/><stop offset="1" stop-color="#fcbc1c"/></linearGradient></defs><path d="M0 1c0-.5.3-.8.8-.8h8.5l1 1.3-1 1.5H0z" fill="#e0a000"/><rect x="0" y="2" width="21" height="14.5" fill="url(#exg)"/><path d="M4 18V11.5c0-.6.4-1 1-1h11c.6 0 1 .4 1 1V18h-4v-4.5H8V18z" fill="#2f8be0"/></svg>
 <svg class="a" style="left:399px;top:7px" width="25" height="25" viewBox="0 0 25 25"><defs><linearGradient id="ff1" x1=".8" y1="0" x2=".3" y2="1"><stop offset="0" stop-color="#ffe23a"/><stop offset=".35" stop-color="#ff9a2a"/><stop offset=".7" stop-color="#ff4a3a"/><stop offset="1" stop-color="#e8197a"/></linearGradient><radialGradient id="ff2" cx=".45" cy=".45" r=".6"><stop offset="0" stop-color="#a65cff"/><stop offset="1" stop-color="#5a3fd0"/></radialGradient></defs><path d="M16 1.5c2.5 2 4 4.5 4.3 7.5 1.3 1.5 2.2 3.5 2.2 6 0 5.5-4.5 9.5-10 9.5S2 20.5 2 15c0-2.3.6-4.3 1.7-6 .2 1 .6 1.8 1.2 2.3C5.3 8 7 5.5 9 4.5c-.3 1.2-.2 2.2.3 3 1.5-1 3.5-1.2 5.3-.5C16.5 5.5 16.8 3.5 16 1.5z" fill="url(#ff1)"/><circle cx="12" cy="14.2" r="5.3" fill="url(#ff2)"/><path d="M4.5 11.5c1.5-.8 3.5-1 5.5-.3 1 .4 2 .3 2.8-.3-1 2-3 2.5-5 2.3z" fill="#ff8a1f"/></svg>
 <svg class="a" style="left:448px;top:8px" width="24" height="24" viewBox="0 0 24 24"><defs><linearGradient id="yg" x1="0" y1="0" x2="1" y2="0"><stop offset="0" stop-color="#ff6a1a"/><stop offset=".6" stop-color="#ff3d2a"/><stop offset="1" stop-color="#ff5ad2"/></linearGradient></defs><circle cx="12" cy="12" r="11.6" fill="#fff"/><path d="M5.2 5.8L12.2 12.4 19.2 5.8M12.2 12.4V20.5" fill="none" stroke="url(#yg)" stroke-width="2.5"/></svg>
 <svg class="a" style="left:498px;top:8px" width="25" height="25" viewBox="0 0 25 25"><ellipse cx="12.2" cy="12.2" rx="11.3" ry="11.2" fill="none" stroke="#ff2a55" stroke-width="1.2"/><ellipse cx="12.6" cy="12.2" rx="6.7" ry="10.4" fill="none" stroke="#ff2a55" stroke-width="1.2"/><path d="M14.8 2.8c3 2.5 3.3 16.5 0 19" fill="none" stroke="#ff2a55" stroke-width="1.1"/></svg>
 <svg class="a" style="left:548px;top:9px" width="21" height="21" viewBox="0 0 21 21"><defs><linearGradient id="pcg" x1="0" y1="0" x2="1" y2="1"><stop offset="0" stop-color="#21d789"/><stop offset=".45" stop-color="#fcf84a"/><stop offset="1" stop-color="#fcf84a"/></linearGradient></defs><rect x="0" y="0" width="21" height="21" fill="url(#pcg)"/><rect x="3" y="3" width="15" height="15" fill="#000"/><text x="4.6" y="11.2" font-family="Liberation Sans" font-size="7.8" fill="#fff" textLength="11" lengthAdjust="spacingAndGlyphs">PC</text><rect x="4.9" y="14.6" width="5" height="1.3" fill="#ddd"/></svg>
 <svg class="a" style="left:596px;top:10px" width="23" height="19" viewBox="0 0 23 19"><defs><linearGradient id="apg" x1="0" y1="0" x2="0" y2="1"><stop offset="0" stop-color="#5a8fc0"/><stop offset="1" stop-color="#4aa56a"/></linearGradient></defs><rect x=".5" y=".5" width="22" height="18" rx="1" fill="#f4f4f4" stroke="#8d8d8d"/><rect x="2.5" y="3.5" width="8" height="13" fill="url(#apg)"/><path d="M13 4h3M13 7h3M13 10h3M13 15h3" stroke="#b8b8b8" stroke-width="1.2"/><rect x="19" y="3.5" width="1.2" height="8" fill="#4c86c2"/></svg>
 <div class="a" style="left:633px;top:0;width:48px;height:40px;background:#f1efee"></div>
 <svg class="a" style="left:646px;top:9px" width="23" height="22" viewBox="0 0 23 22"><rect x="0" y="0" width="21" height="18" fill="#3b3b3b"/><rect x="0" y="0" width="21" height="2" fill="#2e8ae6"/><path d="M3 6h5M3 9.5h7M3 13h4" stroke="#3f8a4a" stroke-width="1.4"/><path d="M15.5 7c-3 0-3.5 1-3.5 2v1.5h3.5v.7H10c-1.5 0-2.5 1-2.5 3s1 3 2.5 3h1v-2c0-1 1-2 2-2h3.5c1 0 2-.8 2-2V9c0-1.3-1-2-3-2z" fill="#3d7ab8"/><path d="M15.5 22c3 0 3.5-1 3.5-2v-1.5h-3.5v-.7H21c1.5 0 2-1 2-3s-.5-3-2-3h-1v2c0 1-1 2-2 2h-3.5c-1 0-2 .8-2 2v2.5c0 1.3 1 1.7 3 1.7z" fill="#f2cf4a"/></svg>
 <div class="a" style="left:441px;top:37px;width:40px;height:3px;background:#0078d7"></div>
 <div class="a" style="left:539px;top:37px;width:40px;height:3px;background:#0078d7"></div>
 <div class="a" style="left:588px;top:37px;width:40px;height:3px;background:#0078d7"></div>
 <div class="a" style="left:633px;top:37px;width:48px;height:3px;background:#0078d7"></div>
 <svg class="a" style="left:1402px;top:15px" width="14" height="8" viewBox="0 0 14 8"><path d="M1 7.5l6-6 6 6" fill="none" stroke="#222" stroke-width="1.2"/></svg>
 <svg class="a" style="left:1424px;top:12px" width="18" height="16" viewBox="0 0 18 16"><path d="M1 5.5h3l4-4v13l-4-4H1z" fill="none" stroke="#222" stroke-width="1.1"/><path d="M11 5c1 1.5 1 4.5 0 6M13.5 3c2 3 2 7 0 10" fill="none" stroke="#222" stroke-width="1.1"/><path d="M16 1.5c2.5 4 2.5 9 0 13" fill="none" stroke="#aaa" stroke-width="1.1"/></svg>
 <div class="a" style="left:1452px;top:12px;font-size:12px;color:#111">РУС</div>
 <div class="a" style="left:1500px;top:4px;font-size:12px;color:#111;width:28px;text-align:center;letter-spacing:-.3px">6:56</div>
 <div class="a" style="left:1487px;top:22px;font-size:12px;color:#111;letter-spacing:-.55px">05.11.2025</div>
 <svg class="a" style="left:1559px;top:12px" width="17" height="17" viewBox="0 0 17 17"><path d="M.6.6h15.3v11.8H9.8L8.2 14 6.6 12.4H.6z" fill="none" stroke="#222" stroke-width="1.2"/></svg>
 <div class="a" style="left:1596px;top:0;width:1px;height:40px;background:#bbb"></div>
</div>
</body></html>
